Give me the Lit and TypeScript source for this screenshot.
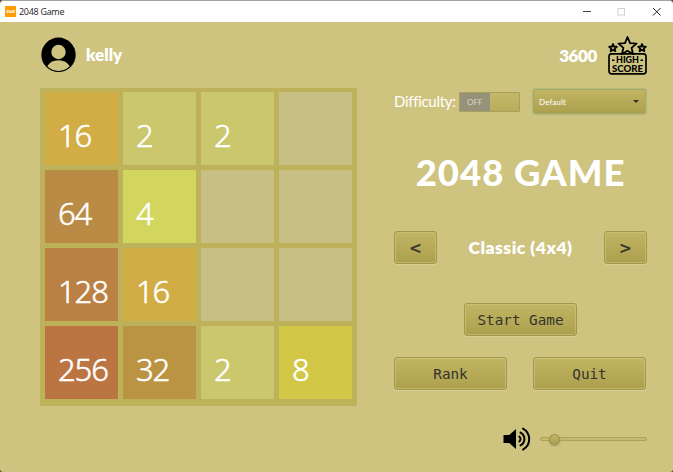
import { LitElement, html, css, svg } from "lit";
import { customElement, property } from "lit/decorators.js";

const TILE_COLORS: Record<number, string> = {
  0: "#c8bf84",
  2: "#cbc76d",
  4: "#d2d65f",
  8: "#d2c747",
  16: "#d2ad45",
  32: "#ba9443",
  64: "#ba8b44",
  128: "#ba8044",
  256: "#ba7543",
};

const BOARD = [16, 2, 2, 0, 64, 4, 0, 0, 128, 16, 0, 0, 256, 32, 2, 8];

@customElement("title-bar")
class TitleBar extends LitElement {
  static styles = css`
    :host { display: flex; align-items: center; height: 22px; box-sizing: border-box; background: #fff; border-top: 1px solid #a3a3a3; padding-left: 5px; border-radius: 4px 4px 0 0; }
    .logo { width: 11px; height: 11px; background: #ff9c00; color: #fff; font: bold 4px/11px "Open Sans", sans-serif; text-align: center; overflow: hidden; }
    .name { flex: 1; margin-left: 3px; font: 9px/18px "Open Sans", sans-serif; letter-spacing: -0.3px; color: #222; }
    svg { display: block; width: 92px; height: 20px; }
  `;
  render() {
    return html`
      <div class="logo">2048</div>
      <div class="name">2048 Game</div>
      <svg viewBox="0 0 92 20" fill="none" stroke="#444" stroke-width="1">
        <path d="M2 9.5h8" />
        <rect x="37" y="6.500" width="6.500" height="6.500" stroke="#d2d2d2" />
        <path d="M72 6l7.500 7.500M79.500 6l-7.500 7.500" stroke="#222" />
      </svg>
    `;
  }
}

@customElement("game-tile")
class GameTile extends LitElement {
  @property({ type: Number }) value = 0;
  static styles = css`
    :host { display: block; }
    .tile { height: 100%; box-sizing: border-box; padding: 22px 0 0 12.500px; color: #fff; font: 300 31px/42px "Noto Sans", "Open Sans", sans-serif; letter-spacing: -1px; -webkit-text-stroke: 0.5px #fff; }
  `;
  render() {
    return html`<div class="tile" style="background:${TILE_COLORS[this.value]}">${this.value || ""}</div>`;
  }
}

@customElement("game-button")
class GameButton extends LitElement {
  static styles = css`
    :host { display: block; height: 33px; }
    button { display: block; width: 100%; height: 100%; box-sizing: border-box; padding: 1px 0 0 0; border: 1px solid #a2974f; border-radius: 3px; background: linear-gradient(#c1b564, #aca04f); box-shadow: inset 0 0 0 1px rgba(213, 202, 128, 0.5), 0 1px 0 #d8cf95; color: #34342c; font: 14.300px/30px "DejaVu Sans Mono", monospace; text-align: center; }
    :host(.arrow) button { padding-top: 0; font-size: 18px; -webkit-text-stroke: 0.4px #34342c; }
  `;
  render() {
    return html`<button><slot></slot></button>`;
  }
}

const star = (cx: number, cy: number, r: number, w: number) => {
  const pts = Array.from({ length: 10 }, (_, i) => {
    const a = -Math.PI / 2 + (i * Math.PI) / 5;
    const q = i % 2 ? r * 0.45 : r;
    return `${(cx + q * Math.cos(a)).toFixed(2)},${(cy + q * Math.sin(a)).toFixed(2)}`;
  }).join(" ");
  return svg`<polygon points=${pts} fill="#cfc47f" stroke="#000" stroke-width=${w} stroke-linejoin="round" />`;
};

@customElement("app-root")
class AppRoot extends LitElement {
  static styles = css`
    :host { display: block; width: 673px; height: 472px; overflow: hidden; background: #444; font-family: Lato, sans-serif; color: #fff; }
    .window { height: 472px; display: flex; flex-direction: column; background: #cfc47f; border-radius: 4px 4px 3px 3px; overflow: hidden; }
    .content { flex: 1; display: grid; grid-template-columns: 317px 253px; column-gap: 37px; padding: 0 26px 0 40px; align-items: start; }
    .user { display: flex; align-items: center; height: 66.400px; box-sizing: border-box; padding-left: 1px; }
    .user svg { width: 36px; height: 36px; }
    .user span { margin: 0 0 0 9px; font-size: 17px; font-weight: 800; line-height: 24px; letter-spacing: 0; }
    .board { display: grid; grid-template-columns: repeat(4, 73px); grid-auto-rows: 73px; gap: 5px; height: 317.500px; box-sizing: border-box; padding: 3.600px 4px 6px 5.400px; background: #bdb15a; }
    .score { display: flex; justify-content: flex-end; align-items: center; height: 66px; gap: 11px; }
    .score span { font-size: 17px; font-weight: 800; line-height: 24px; letter-spacing: -0.4px; margin-top: 2px; }
    .score svg { width: 39px; height: 39px; margin-top: 1px; }
    .options { display: flex; align-items: center; height: 27px; }
    .options label { width: 65px; font-size: 15px; letter-spacing: -0.3px; white-space: nowrap; margin-top: -2px; }
    .toggle { display: flex; width: 61px; height: 20px; box-sizing: border-box; border: 1px solid #aaa05e; border-radius: 1px; }
    .off { flex: 1; background: #969279; color: #dad7bf; font-size: 8px; line-height: 19px; text-align: center; }
    .knob { flex: 1; background: linear-gradient(#c3b768, #b9ad5d); }
    .select { display: flex; flex: none; align-items: center; justify-content: space-between; width: 113px; height: 25px; box-sizing: border-box; margin-left: 13px; padding: 0 6px 0 5px; border: 1px solid #a6a963; border-radius: 2px; background: linear-gradient(#c1b564, #aca04f); box-shadow: 0 0 1px 1px #b0bb80; font-size: 8px; letter-spacing: 0.1px; }
    .caret { border: 3px solid transparent; border-top: 3px solid #34342c; border-bottom: 0; }
    h1 { margin: 35px 0 0; font-size: 36.500px; line-height: 44px; font-weight: 900; text-align: center; white-space: nowrap; letter-spacing: 1px; }
    .mode { display: flex; align-items: center; justify-content: space-between; margin-top: 37px; }
    .mode game-button { width: 43px; }
    .mode span { font-size: 17.500px; font-weight: 800; letter-spacing: 0.5px; }
    .start { width: 113px; margin: 39px 0 0 70px; }
    .actions { display: flex; justify-content: space-between; margin-top: 21px; padding-right: 1px; }
    .actions game-button { width: 113px; }
    .volume { display: flex; align-items: center; height: 30px; margin: 34px 0 0 109px; gap: 8px; }
    .volume svg { width: 29px; height: 26px; }
    .track { flex: 1; display: flex; align-items: center; height: 4px; box-sizing: border-box; border: 1px solid #ada25a; border-radius: 2px; background: #c5ba72; }
    .thumb { flex: none; width: 9px; height: 9px; margin-left: 8px; border: 1px solid #978c49; border-radius: 50%; background: linear-gradient(#c1b564, #aca04f); box-shadow: 0 1px 2px #9f965c; }
  `;
  render() {
    return html`
      <div class="window">
        <title-bar></title-bar>
        <div class="content">
          <section>
            <div class="user">
              <svg viewBox="0 0 36 36">
                <circle cx="17.500" cy="17.800" r="17.200" />
                <circle cx="17.500" cy="15" r="7.200" fill="#cfc47f" />
                <path d="M6.300 29.300Q9.500 23.300 17.500 23.300T28.700 29.300A15.800 15.800 0 0 1 6.300 29.300Z" fill="#cfc47f" />
              </svg>
              <span>kelly</span>
            </div>
            <div class="board">
              ${BOARD.map((v) => html`<game-tile .value=${v}></game-tile>`)}
            </div>
          </section>
          <section>
            <div class="score">
              <span>3600</span>
              <svg viewBox="0 0 39 39" fill="none" stroke="#000">
                <rect x="1" y="17.800" width="37" height="20" rx="2.500" stroke-width="1.700" />
                ${star(19.5, 10.5, 9.5, 1.8)}
                ${star(5, 12, 4, 1.8)}
                ${star(34, 12, 4, 1.8)}
                <g fill="#000" stroke="none" font-family="Lato, sans-serif" font-weight="900" font-size="8.700" text-anchor="middle">
                  <text x="19.500" y="27" textLength="23" lengthAdjust="spacingAndGlyphs">HIGH</text>
                  <text x="19.500" y="35.700" textLength="31" lengthAdjust="spacingAndGlyphs">SCORE</text>
                </g>
                <path d="M4 24.300h2.500M32.500 24.300h2.500" stroke-width="1.400" />
              </svg>
            </div>
            <div class="options">
              <label>Difficulty:</label>
              <div class="toggle"><div class="off">OFF</div><div class="knob"></div></div>
              <div class="select"><span>Default</span><i class="caret"></i></div>
            </div>
            <h1>2048 GAME</h1>
            <div class="mode">
              <game-button class="arrow">&lt;</game-button>
              <span>Classic (4x4)</span>
              <game-button class="arrow">&gt;</game-button>
            </div>
            <game-button class="start">Start Game</game-button>
            <div class="actions">
              <game-button>Rank</game-button>
              <game-button>Quit</game-button>
            </div>
            <div class="volume">
              <svg viewBox="0 0 29 26" fill="none" stroke="#000" stroke-width="2" stroke-linecap="round">
                <path d="M0.500 9h5.700L13 3v20L6.200 17H0.500z" fill="#000" stroke="none" />
                <path d="M16.300 10.500a3.200 3.200 0 0 1 0 5M17.500 6.600a7.200 7.200 0 0 1 0 12.800M20 2.500a12 12 0 0 1 0 21" />
              </svg>
              <div class="track"><div class="thumb"></div></div>
            </div>
          </section>
        </div>
      </div>
    `;
  }
}
